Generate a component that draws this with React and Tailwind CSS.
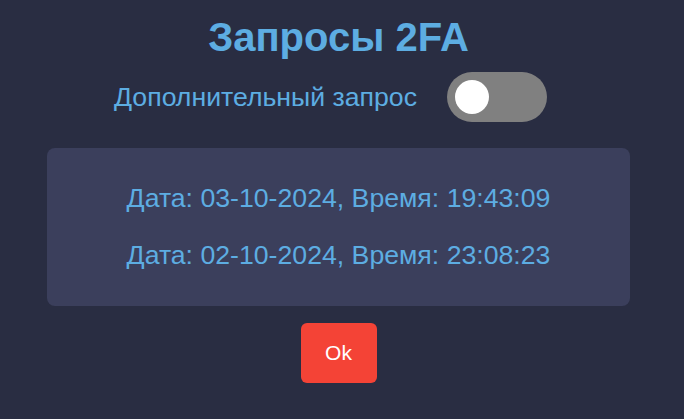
import React, { useState } from "react";

const App = () => {
  const [extra, setExtra] = useState(false);
  const requests = [
    { date: "03-10-2024", time: "19:43:09" },
    { date: "02-10-2024", time: "23:08:23" },
  ];

  return (
    <div className="w-[684px] h-[419px] bg-[#292d42] font-['Liberation_Sans',Arial,sans-serif] overflow-hidden">
      <div className="w-[583px] ml-[47px] flex flex-col items-center">
        {/* title */}
        <h2 className="mt-[13px] text-[40px] leading-[48px] font-bold text-[#5dade2]">
          Запросы 2FA
        </h2>

        {/* toggle row */}
        <div className="mt-[11px] mr-[16px] flex items-center gap-[30px]">
          <span className="text-[26.67px] leading-[30px] text-[#5dade2]">Дополнительный запрос</span>
          <button
            onClick={() => setExtra(!extra)}
            className={`w-[100px] h-[50px] rounded-full p-[8px] flex items-center ${
              extra ? "bg-[#5dade2] justify-end" : "bg-[#808080] justify-start"
            }`}
          >
            <span className="block w-[34px] h-[34px] rounded-full bg-white" />
          </button>
        </div>

        {/* list */}
        <div className="mt-[26px] w-full h-[158px] rounded-lg bg-[#3b3f5c] flex flex-col items-center pt-[35px] gap-[27px]">
          {requests.map((r) => (
            <p key={r.date} className="text-[26.67px] leading-[30px] text-[#5dade2]">
              Дата: {r.date}, Время: {r.time}
            </p>
          ))}
        </div>

        <button className="mt-[17px] w-[76px] h-[60px] rounded-md bg-[#f44336] text-white text-[21px]">
          Ok
        </button>
      </div>
    </div>
  );
};

export default App;
